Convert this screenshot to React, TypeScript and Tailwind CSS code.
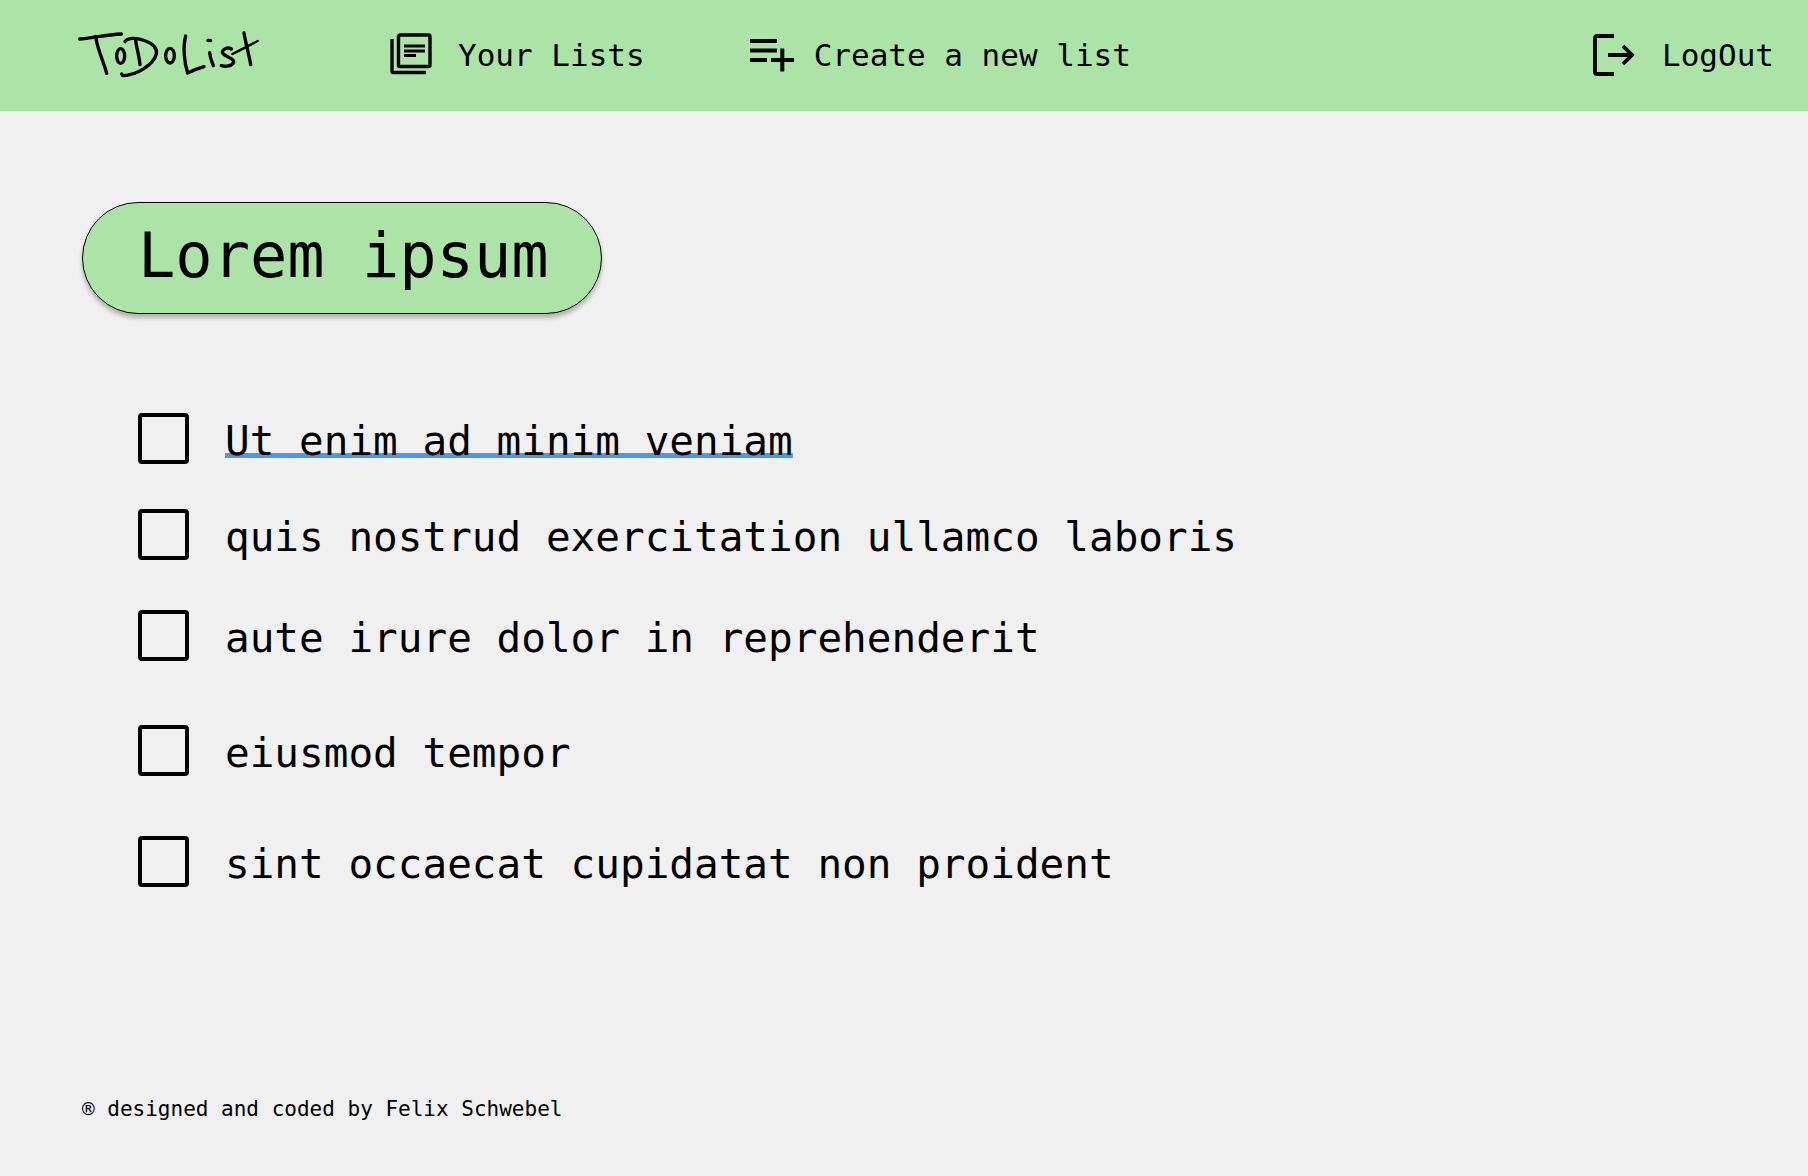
import React from "react";

function Logo() {
  return (
    <svg
      role="img"
      aria-label="ToDoList"
      viewBox="50 60 549 144"
      className="h-12 w-[183px]"
      fill="none"
      stroke="currentColor"
      strokeWidth="10"
      strokeLinecap="round"
      strokeLinejoin="round"
    >
      <path d="M58 87C90 86 135 74 183 72" />
      <path d="M106 79C110 115 130 155 139 190" />
      <ellipse cx="181" cy="138" rx="12" ry="22" />
      <path d="M226 92C230 118 237 142 239 164" />
      <path d="M194 95C203 80 235 84 256 93C281 103 291 118 288 132C279 165 228 196 187 197L184 192" />
      <ellipse cx="329" cy="137" rx="13" ry="22" />
      <path d="M376 78C367 112 372 158 382 189C396 182 414 175 431 170" />
      <path d="M448 128C449 144 455 155 459 167" />
      <path d="M443 91L451 92" strokeWidth="10" />
      <path d="M513 117C501 109 480 121 488 131C497 141 522 144 520 156C516 170 496 170 483 167" />
      <path d="M551 69C557 105 567 138 571 164" />
      <path d="M516 132C541 120 569 105 592 93" strokeWidth="7" />
    </svg>
  );
}

function ListsIcon() {
  return (
    <svg aria-hidden="true" viewBox="0 0 42 42" className="size-[42px]" fill="none" stroke="currentColor" strokeWidth="3.4">
      <path d="M2 6V38Q2 39.5 3.5 39.5H36" />
      <rect x="8.5" y="2" width="31.5" height="31.5" rx="1.5" />
      <path d="M14 13H35M14 18H35M14 22.5H26" strokeWidth="3" />
    </svg>
  );
}

function AddListIcon() {
  return (
    <svg aria-hidden="true" viewBox="0 0 44 34" className="mt-0.5 h-[34px] w-11" fill="none" stroke="currentColor" strokeWidth="4">
      <path d="M0 3H27M0 12.5H27M0 22H17M21 22H44M32.3 10.5V33.5" />
    </svg>
  );
}

function LogOutIcon() {
  return (
    <svg aria-hidden="true" viewBox="0 0 42 42" className="mt-0.5 size-[42px]" fill="none" stroke="currentColor" strokeWidth="3.8">
      <path d="M21 2H4Q2 2 2 4V38Q2 40 4 40H21" />
      <path d="M15 21H39M30 12L39 21L30 30" />
    </svg>
  );
}

const items = [
  { id: "item-1", text: "Ut enim ad minim veniam", active: true, gap: "mb-[45px]" },
  { id: "item-2", text: "quis nostrud exercitation ullamco laboris", active: false, gap: "mb-[50px]" },
  { id: "item-3", text: "aute irure dolor in reprehenderit", active: false, gap: "mb-16" },
  { id: "item-4", text: "eiusmod tempor", active: false, gap: "mb-[60px]" },
  { id: "item-5", text: "sint occaecat cupidatat non proident", active: false, gap: "" },
];

export default function App() {
  return (
    <div className="flex min-h-screen flex-col bg-[#f0f0f0] font-['DejaVu_Sans_Mono',monospace] text-black">
      <header className="flex h-[111px] items-center bg-[#abe4a6] pr-[34px] pb-1 pl-[77px] text-[31px] leading-10 whitespace-nowrap">
        <a href="#home">
          <Logo />
        </a>
        <nav className="ml-[130px] flex items-center gap-[105px]">
          <a href="#lists" className="flex items-center gap-[26px]">
            <ListsIcon />
            <span className="pt-0.5">Your Lists</span>
          </a>
          <a href="#new" className="flex items-center gap-5">
            <AddListIcon />
            <span className="pt-0.5">Create a new list</span>
          </a>
        </nav>
        <button type="button" className="ml-auto flex items-center gap-[27px]">
          <LogOutIcon />
          <span className="pt-0.5">LogOut</span>
        </button>
      </header>

      <main className="flex flex-1 flex-col items-start pt-[91px] pl-[82px]">
        <h1 className="rounded-full border border-black bg-[#abe4a6] pt-[18px] pr-[52px] pb-[22px] pl-[55px] text-[62px] leading-[70px] shadow-[0_4px_4px_rgba(0,0,0,0.25)]">
          Lorem ipsum
        </h1>
        <ul className="mt-[99px] ml-14">
          {items.map((item) => (
            <li key={item.id} className={`flex items-center gap-9 ${item.gap}`}>
              <input
                id={item.id}
                type="checkbox"
                className="size-[51px] shrink-0 appearance-none rounded-sm border-4 border-black checked:bg-black"
              />
              <label
                htmlFor={item.id}
                className={
                  item.active
                    ? "pt-1.5 text-[41px] leading-[45px] underline decoration-[#4799f8] decoration-[5px] underline-offset-[-2px] [text-decoration-skip-ink:none]"
                    : "pt-1.5 text-[41px] leading-[45px]"
                }
              >
                {item.text}
              </label>
            </li>
          ))}
        </ul>
      </main>

      <footer className="pb-[53px] pl-[82px] text-[21px] leading-7">
        ® designed and coded by Felix Schwebel
      </footer>
    </div>
  );
}
